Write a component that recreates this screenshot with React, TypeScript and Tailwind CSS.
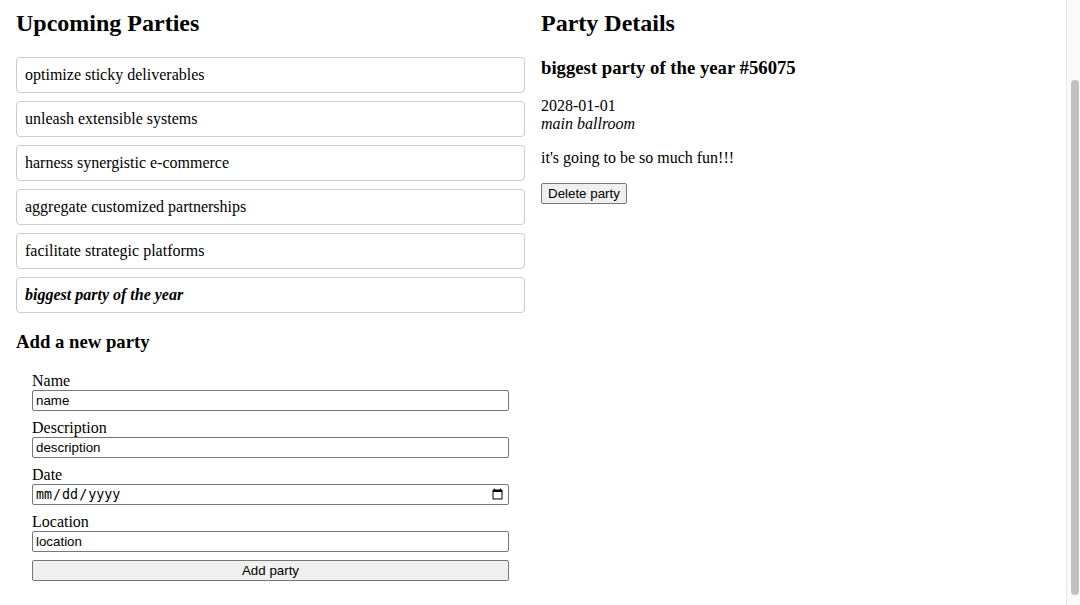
import React from "react";

const parties = [
  "optimize sticky deliverables",
  "unleash extensible systems",
  "harness synergistic e-commerce",
  "aggregate customized partnerships",
  "facilitate strategic platforms",
];

const inputCls =
  "block w-full h-[21px] border border-[#767676] rounded-[2px] px-[3px] bg-white text-black font-['Liberation_Sans',Arial,sans-serif] text-[13.333px] leading-[normal] outline-none";

function Field({ label, value, type = "text" }: { label: string; value: string; type?: string }) {
  return (
    <label className="flex flex-col">
      <span className="h-[18px] leading-[18px]">{label}</span>
      {type === "date" ? (
        <input
          type="date"
          className="block w-full h-[21px] border border-[#767676] rounded-[2px] px-[2px] bg-white text-black font-['DejaVu_Sans_Mono',monospace] text-[13.333px] leading-[normal] outline-none"
        />
      ) : (
        <input type={type} defaultValue={value} className={inputCls} />
      )}
    </label>
  );
}

export default function App() {
  return (
    <div className="flex h-[605px] w-[1080px] overflow-hidden bg-white text-black font-['Liberation_Serif','Times_New_Roman',serif] text-[16px] leading-[normal]">
      <main className="flex-1 grid grid-cols-2 gap-4 px-4 pt-[9px] items-start">
        <section>
          <h2 className="text-[24px] font-bold leading-[28px] mb-5">Upcoming Parties</h2>
          <ul className="flex flex-col gap-2">
            {parties.map((p) => (
              <li
                key={p}
                className="border border-[#cccccc] rounded-[4px] px-2 py-2 leading-[18px]"
              >
                {p}
              </li>
            ))}
            <li className="border border-[#cccccc] rounded-[4px] px-2 py-2 leading-[18px] font-bold italic">
              biggest party of the year
            </li>
          </ul>
          <h3 className="text-[18.72px] font-bold leading-[21.5px] mt-[17.72px] mb-[19.72px]">
            Add a new party
          </h3>
          <form className="flex flex-col gap-2 px-4" onSubmit={(e) => e.preventDefault()}>
            <Field label="Name" value="name" />
            <Field label="Description" value="description" />
            <Field label="Date" value="" type="date" />
            <Field label="Location" value="location" />
            <button
              type="submit"
              className="h-[21px] w-full border border-[#767676] rounded-[2px] bg-[#efefef] text-black font-['Liberation_Sans',Arial,sans-serif] text-[13.333px] leading-[normal]"
            >
              Add party
            </button>
          </form>
        </section>
        <section>
          <h2 className="text-[24px] font-bold leading-[28px]">Party Details</h2>
          <h3 className="text-[18.72px] font-bold leading-[21.5px] mt-[19.72px] mb-[18.72px]">
            biggest party of the year #56075
          </h3>
          <div className="leading-[18px]">
            <div>2028-01-01</div>
            <div className="italic">main ballroom</div>
          </div>
          <p className="my-4 leading-[18px]">it's going to be so much fun!!!</p>
          <button
            type="button"
            className="h-[21px] px-[6px] border border-[#767676] rounded-[2px] bg-[#efefef] text-black font-['Liberation_Sans',Arial,sans-serif] text-[13.333px] leading-[normal]"
          >
            Delete party
          </button>
        </section>
      </main>
      <div className="w-[14px] shrink-0 border-l border-[#e8e8e8] bg-[#fafafa] flex flex-col pt-[80px] pb-[10px] items-center">
        <div className="flex-1 w-[8px] rounded-full bg-[#c1c1c1] ml-[2px]" />
      </div>
    </div>
  );
}
